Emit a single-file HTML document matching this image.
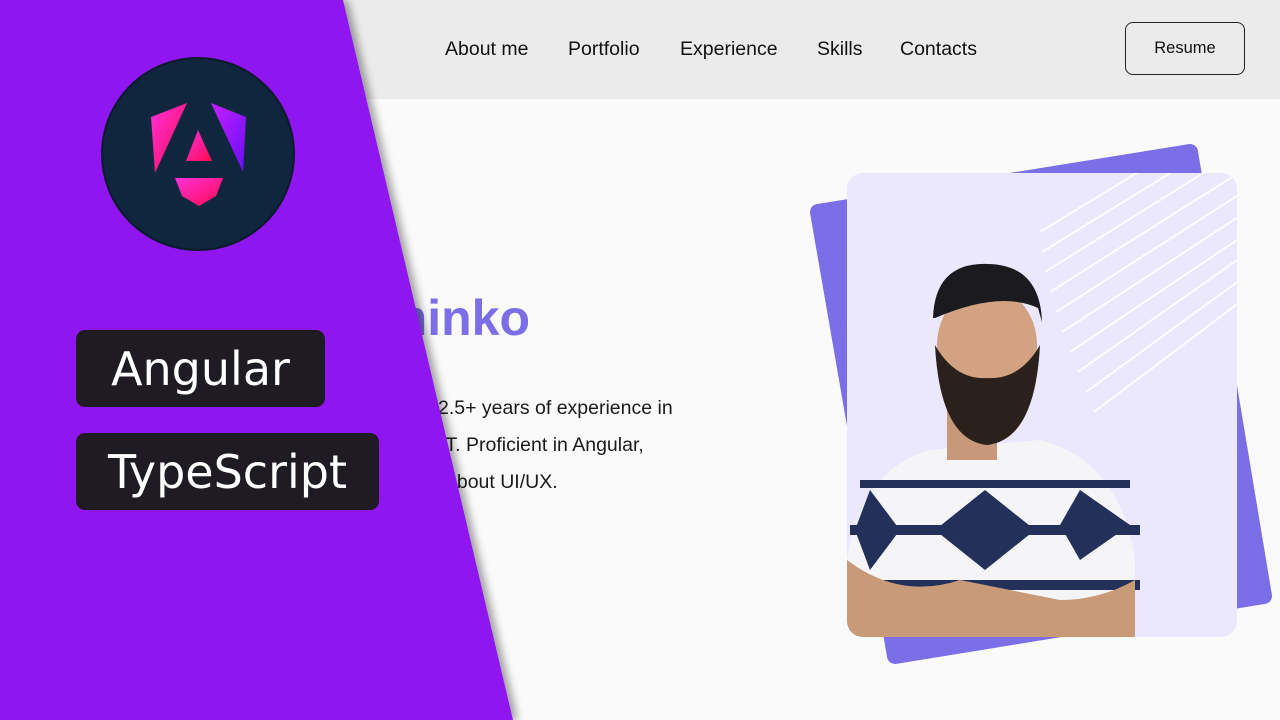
<!DOCTYPE html>
<html><head><meta charset="utf-8"><style>
*{margin:0;padding:0;box-sizing:border-box}
body{width:1280px;height:720px;overflow:hidden;background:#fafafa;position:relative;font-family:"Liberation Sans",sans-serif}
.hdr{position:absolute;left:0;top:0;width:1280px;height:99px;background:#ebebeb}
.nav{position:absolute;top:38px;font-size:19.5px;color:#111}
.btn{position:absolute;left:1125px;top:22px;width:120px;height:53px;border:1.5px solid #222;border-radius:8px;font-size:16.5px;display:flex;align-items:center;justify-content:center;color:#111}
.t{position:absolute;white-space:nowrap;color:#1a1a1a;font-size:19.5px}
.lbl{position:absolute;background:#1e1b22;border-radius:9px;color:#fff;font-family:"DejaVu Sans",sans-serif;font-size:46px;display:flex;align-items:center;justify-content:center}
</style></head><body>
<div class="hdr"></div>
<div class="nav" style="left:445px">About me</div>
<div class="nav" style="left:568px">Portfolio</div>
<div class="nav" style="left:680px">Experience</div>
<div class="nav" style="left:817px">Skills</div>
<div class="nav" style="left:900px">Contacts</div>
<div class="btn">Resume</div>
<div class="t" style="right:750px;top:289px;font-size:50px;font-weight:bold;color:#7b6ee6">Kaminko</div>
<div class="t" style="left:438px;top:397px">2.5+ years of experience in</div>
<div class="t" style="left:440px;top:434px">IT. Proficient in Angular,</div>
<div class="t" style="left:446px;top:471px">about UI/UX.</div>

<svg style="position:absolute;left:0;top:0" width="1280" height="720">
<defs>
<filter id="sh" x="-10%" y="-10%" width="130%" height="130%"><feDropShadow dx="5" dy="0" stdDeviation="4" flood-color="#000" flood-opacity="0.35"/></filter>
<linearGradient id="g" x1="0" y1="0" x2="1" y2="1"><stop offset="0" stop-color="#ff31d9"/><stop offset="1" stop-color="#ff0a4f"/></linearGradient>
<linearGradient id="g2" x1="0" y1="0" x2="1" y2="1"><stop offset="0" stop-color="#c222ff"/><stop offset="1" stop-color="#6a0cf7"/></linearGradient>
</defs>
<polygon points="818,212 1190,152 1264,596 895,656" fill="#7b6ee6" stroke="#7b6ee6" stroke-width="16" stroke-linejoin="round"/>
<clipPath id="c"><rect x="847" y="173" width="390" height="464" rx="16"/></clipPath>
<rect x="847" y="173" width="390" height="464" rx="16" fill="#ebe7fd"/>
<g clip-path="url(#c)">
<g stroke="#fff" stroke-width="2" opacity="0.9">
<line x1="1040" y1="232" x2="1240" y2="110"/><line x1="1042" y1="252" x2="1240" y2="130"/><line x1="1045" y1="272" x2="1240" y2="150"/><line x1="1050" y1="292" x2="1240" y2="172"/><line x1="1056" y1="312" x2="1240" y2="194"/><line x1="1062" y1="332" x2="1240" y2="216"/><line x1="1070" y1="352" x2="1240" y2="238"/><line x1="1078" y1="372" x2="1240" y2="258"/><line x1="1086" y1="392" x2="1240" y2="280"/><line x1="1094" y1="412" x2="1240" y2="302"/>
</g>
<path d="M847,560 Q860,470 930,450 L1040,440 Q1120,460 1135,560 L1135,637 L847,637Z" fill="#f5f5f7"/>
<g fill="#22305a">
<rect x="860" y="480" width="270" height="8"/><rect x="850" y="525" width="290" height="10"/><rect x="850" y="580" width="290" height="10"/>
<polygon points="985,490 1035,530 985,570 935,530"/><polygon points="1080,490 1130,525 1080,560 1060,525"/><polygon points="870,490 900,530 870,570 855,530"/>
</g>
<path d="M847,560 Q900,600 960,580 L1060,600 Q1100,600 1135,580 L1135,637 L847,637Z" fill="#c99a78"/>
<rect x="947" y="400" width="50" height="60" fill="#c8987a"/>
<ellipse cx="987" cy="345" rx="50" ry="58" fill="#d2a283"/>
<path d="M935,345 Q940,440 987,445 Q1035,440 1040,345 Q1020,380 987,378 Q955,380 935,345Z" fill="#2a211c"/>
<path d="M933,318 Q935,262 988,264 Q1040,265 1042,322 L1038,308 Q1000,290 935,318Z" fill="#1a1a1f"/>
</g>
<polygon points="0,0 343,0 513,720 0,720" fill="#8f14f0" filter="url(#sh)"/>
<circle cx="198" cy="154" r="96" fill="#10263e" stroke="#0b1a2c" stroke-width="2"/>
<polygon points="151,117 187,103 155,173" fill="url(#g)"/>
<polygon points="211,103 246,117 243,172" fill="url(#g2)"/>
<polygon points="198,130 212,161 186,161" fill="url(#g)"/>
<polygon points="175,178 223,178 216,196 199,206 182,196" fill="url(#g)"/>
</svg>
<div class="lbl" style="left:76px;top:330px;width:249px;height:77px">Angular</div>
<div class="lbl" style="left:76px;top:433px;width:303px;height:77px">TypeScript</div>
</body></html>
